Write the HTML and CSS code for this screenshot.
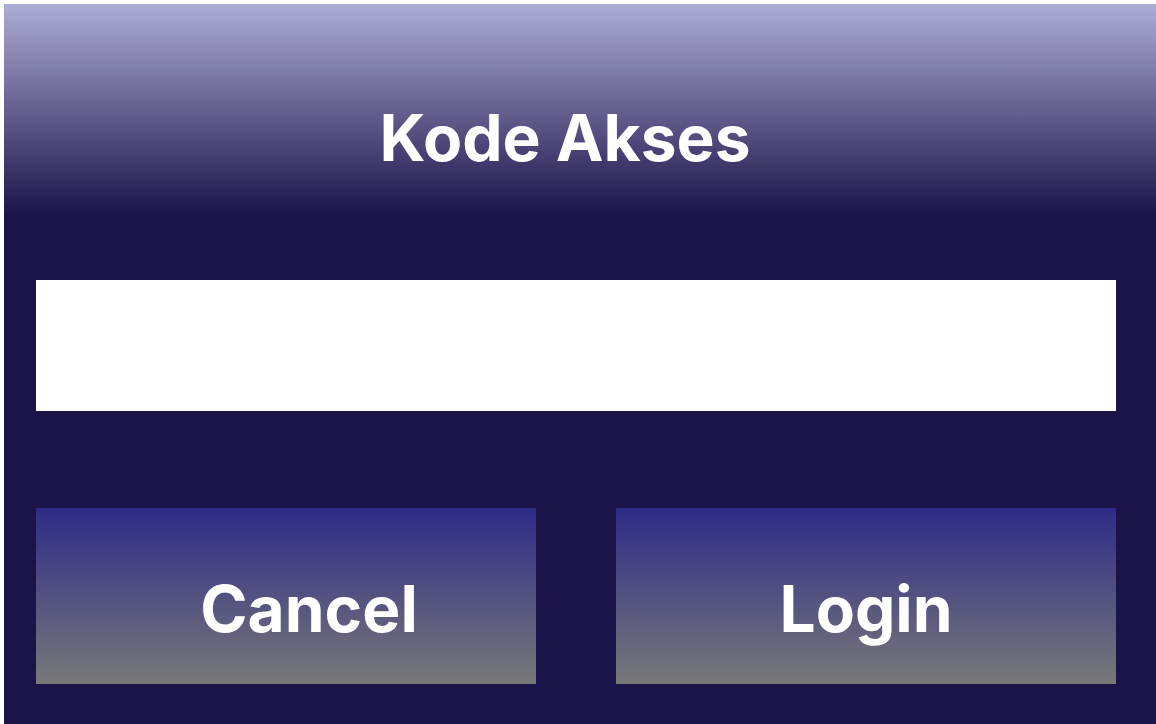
FILE: index.html
```html
<!DOCTYPE html>
<html>
<head>
<meta charset="utf-8">
<link rel="stylesheet" href="styles.css">
</head>
<body>
<div class="frame">
  <div class="header"><h1 class="title">Kode Akses</h1></div>
  <div class="content">
    <input class="code" type="password">
    <div class="actions">
      <button class="btn btn-cancel">Cancel</button>
      <button class="btn">Login</button>
    </div>
  </div>
</div>
</body>
</html>
```
FILE: styles.css
```css
html, body { margin: 0; padding: 0; background: #ffffff; overflow: hidden; }
.frame {
  margin: 4px 0 0 4px;
  width: 1152px;
  height: 724px;
  background: #1b1449;
  font-family: Inter, "Noto Sans", sans-serif;
  display: flex;
  flex-direction: column;
}
.header {
  height: 211px;
  background: linear-gradient(to bottom, #aeadd5 0%, #1b1449 100%);
  display: flex;
  align-items: center;
  justify-content: center;
  padding-right: 30px;
  padding-top: 56px;
  box-sizing: border-box;
}
.title {
  margin: 0;
  color: #ffffff;
  font-weight: 700;
  font-size: 64px;
  line-height: 1;
}
.content {
  padding: 65px 40px 0 32px;
  display: flex;
  flex-direction: column;
}
.code {
  height: 131px;
  border: 0;
  margin: 0;
  padding: 0;
  background: #ffffff;
  outline: none;
  width: 100%;
  box-sizing: border-box;
}
.actions {
  margin-top: 97px;
  display: flex;
  gap: 80px;
}
.btn {
  width: 500px;
  height: 176px;
  border: 0;
  margin: 0;
  padding: 0;
  background: linear-gradient(to bottom, #2e2b88 0%, #787878 100%);
  color: #ffffff;
  font-family: Inter, "Noto Sans", sans-serif;
  font-weight: 700;
  font-size: 64px;
  padding-top: 24px;
}
.btn-cancel {
  padding-left: 46px;
}
```
